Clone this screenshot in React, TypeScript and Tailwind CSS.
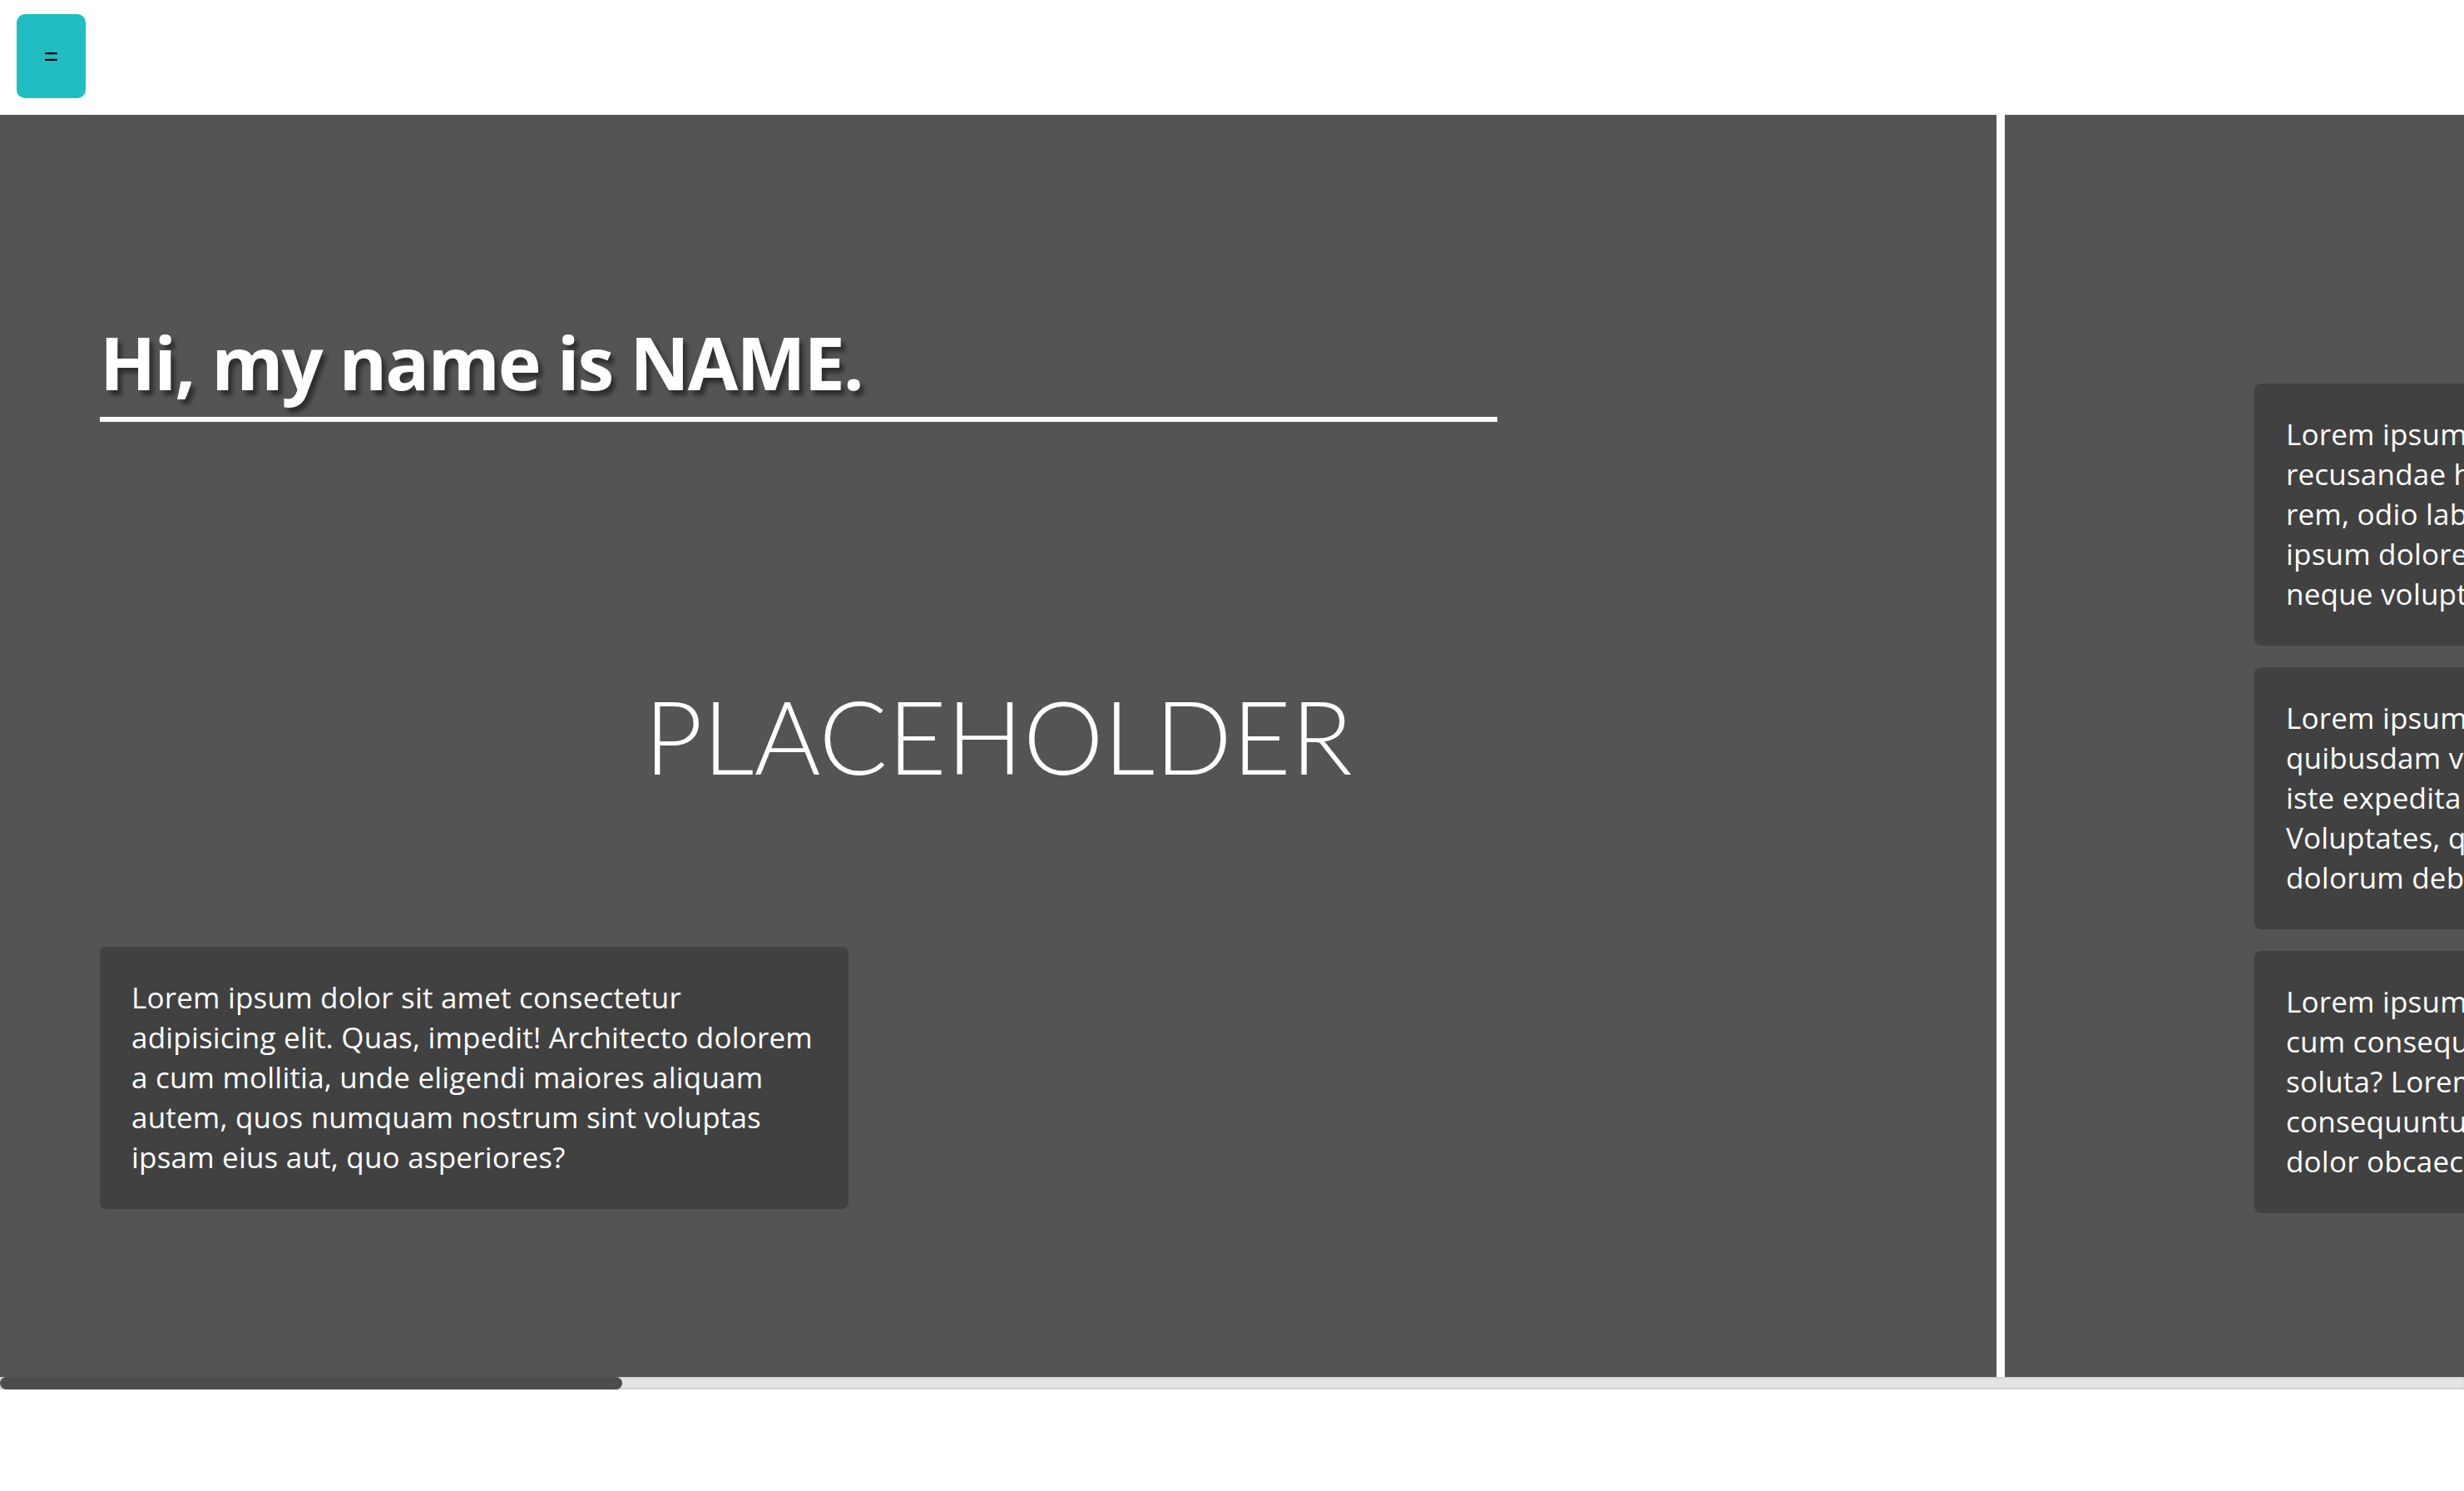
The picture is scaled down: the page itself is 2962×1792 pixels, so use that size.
import { ReactNode } from "react";

type CardProps = {
  lines: string[];
};

function TextCard({ lines }: CardProps) {
  return (
    <div className="w-[900px] shrink-0 overflow-hidden rounded-[8px] bg-[#414141] px-[38px] pb-[38px] pt-[37px] text-[35px] leading-[48px] tracking-[0.2px] text-white">
      {lines.map((line, i) => (
        <span key={i} className="block whitespace-nowrap">
          {line}
        </span>
      ))}
    </div>
  );
}

function Panel({ children }: { children: ReactNode }) {
  return (
    <section className="h-[1517px] w-[2400px] shrink-0 bg-[#545454]">
      {children}
    </section>
  );
}

const introLines = [
  "Lorem ipsum dolor sit amet consectetur",
  "adipisicing elit. Quas, impedit! Architecto dolorem",
  "a cum mollitia, unde eligendi maiores aliquam",
  "autem, quos numquam nostrum sint voluptas",
  "ipsam eius aut, quo asperiores?",
];

const aboutCards = [
  [
    "Lorem ipsum dolor sit amet consectetur",
    "recusandae harum dolorem quos illum",
    "rem, odio laboriosam. Nihil, quasi. Lorem",
    "ipsum dolores nam sequi, tempore",
    "neque voluptatibus nisi aliquid.",
  ],
  [
    "Lorem ipsum dolor sit amet consectetur",
    "quibusdam voluptatem molestias, tenetur",
    "iste expedita nobis ratione sunt pariatur.",
    "Voluptates, quae? Doloremque eveniet",
    "dolorum debitis quod animi.",
  ],
  [
    "Lorem ipsum dolor sit amet consectetur",
    "cum consequatur ipsa, nemo dicta aliquam",
    "soluta? Lorem ipsum dolor sit amet,",
    "consequuntur at facilis officiis nostrum",
    "dolor obcaecati magnam.",
  ],
];

export default function App() {
  return (
    <div className="min-h-[1792px] w-full overflow-hidden bg-white font-['Open_Sans',sans-serif]">
      {/* top bar */}
      <header className="flex h-[138px] items-start px-[20px] pt-[17px]">
        <button className="flex h-[101px] w-[83px] items-center justify-center rounded-[10px] bg-[#20bec2] font-['Liberation_Sans',sans-serif] text-[30px] leading-none text-black">
          =
        </button>
      </header>

      {/* horizontal slides */}
      <main className="flex w-full gap-[10px] overflow-hidden bg-white">
        <Panel>
          <div className="flex flex-col px-[120px] pt-[247px]">
            <h1 className="whitespace-nowrap text-[88px] font-bold leading-[100px] tracking-[-2px] text-white [text-shadow:5px_6px_5px_rgba(0,0,0,0.45)]">
              Hi, my name is NAME.
            </h1>
            <div className="mt-[16px] h-[6px] w-[1680px] bg-white" />
            <p className="mt-[316px] text-center font-['Lato',sans-serif] text-[122px] font-light leading-[122px] text-white">
              PLACEHOLDER
            </p>
            <div className="mt-[193px]">
              <TextCard lines={introLines} />
            </div>
          </div>
        </Panel>

        <Panel>
          <div className="flex flex-col gap-[26px] pl-[300px] pt-[323px]">
            {aboutCards.map((lines, i) => (
              <TextCard key={i} lines={lines} />
            ))}
          </div>
        </Panel>

        <Panel>
          <div className="flex flex-col gap-[26px] pl-[300px] pt-[323px]">
            <TextCard lines={introLines} />
          </div>
        </Panel>
      </main>

      {/* scroll track */}
      <div className="h-[15px] w-full bg-[#e4e4e4] shadow-[inset_0_2px_2px_rgba(0,0,0,0.07),inset_0_-2px_2px_rgba(0,0,0,0.07)]">
        <div className="h-full w-[748px] rounded-full bg-[#4d4d4d]" />
      </div>
    </div>
  );
}
